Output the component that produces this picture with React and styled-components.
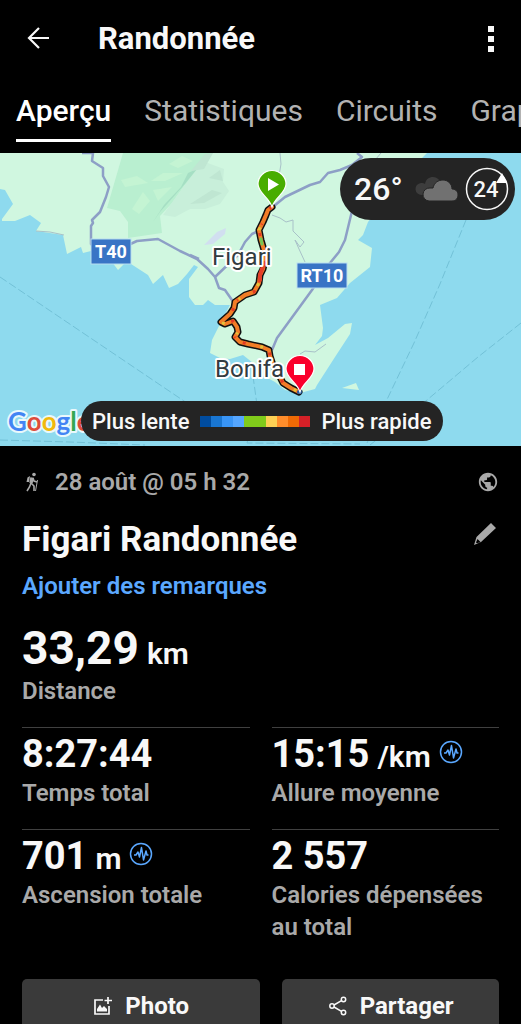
import React from "react";
import styled, { createGlobalStyle } from "styled-components";

const Colors = {
  BLACK: "#000",
  WHITE: "#f8f8f8",
  GREY: "#a9a9a9",
  TAB_GREY: "#b2b2b2",
  LINK: "#5ba8ff",
  PILL: "#242424",
  BUTTON: "#3a3a3a",
  DIVIDER: "#404040",
  ROAD: "#8d9fc6",
  SEA: "#8edaee",
  LAND: "#d0f7e0",
};

const GlobalStyle = createGlobalStyle`
  * {
    box-sizing: border-box;
  }
  body {
    margin: 0;
    background: ${Colors.BLACK};
    font-family: Roboto, "Liberation Sans", sans-serif;
  }
  button {
    font-family: inherit;
    border: 0;
    padding: 0;
    background: none;
    cursor: pointer;
  }
`;

const Page = styled.div`
  display: flex;
  flex-direction: column;
  height: 100vh;
  color: ${Colors.WHITE};
`;

const Header = styled.header`
  display: flex;
  align-items: center;
  flex-shrink: 0;
  height: 78px;
  padding: 0 16px 0 22px;
`;

const Title = styled.h1`
  flex: 1;
  margin: 0 0 0 44px;
  font-size: 31px;
  line-height: 40px;
  font-weight: 700;
`;

const IconButton = styled.button`
  display: flex;
  align-items: center;
  justify-content: center;
  width: ${({ $size }) => $size || 32}px;
  height: 32px;
  color: ${({ $muted }) => ($muted ? Colors.GREY : Colors.WHITE)};
`;

const Tabs = styled.nav`
  display: flex;
  flex-shrink: 0;
  gap: 33px;
  height: 75px;
  padding: 0 16px;
  overflow-x: auto;
  scrollbar-width: none;
`;

const Tab = styled.button`
  flex-shrink: 0;
  height: 64px;
  padding-top: 4px;
  font-size: 30px;
  line-height: 57px;
  font-weight: ${({ $active }) => ($active ? 500 : 400)};
  color: ${({ $active }) => ($active ? "#fff" : Colors.TAB_GREY)};
  border-bottom: 3px solid ${({ $active }) => ($active ? "#fff" : "transparent")};
`;

const Content = styled.main`
  flex: 1;
  min-height: 0;
  overflow-y: auto;
  scrollbar-width: none;
`;

const MapContainer = styled.section`
  position: relative;
  height: 293px;
  background: ${Colors.SEA};
`;

const MapDrawing = styled.svg`
  display: block;
  width: 100%;
  height: 100%;
`;

const Weather = styled.div`
  position: absolute;
  top: 5px;
  right: 6px;
  display: flex;
  align-items: center;
  height: 62px;
  padding: 0 5px 0 14px;
  border-radius: 31px;
  background: ${Colors.PILL};
`;

const Temperature = styled.span`
  width: 61px;
  font-size: 32px;
  font-weight: 500;
`;

const Legend = styled.div`
  position: absolute;
  left: 81px;
  bottom: 5px;
  display: flex;
  align-items: center;
  gap: 11px;
  height: 40px;
  padding: 0 11px;
  border-radius: 20px;
  background: ${Colors.PILL};
  font-size: 22px;
  font-weight: 500;
  white-space: nowrap;
`;

const Scale = styled.div`
  display: flex;
`;

const Swatch = styled.span`
  width: 11px;
  height: 11px;
  background: ${({ $color }) => $color};
`;

const Details = styled.section`
  padding: 20px 22px 24px;
`;

const DateRow = styled.div`
  display: flex;
  align-items: center;
  height: 32px;
  font-size: 24px;
  font-weight: 600;
  color: ${Colors.GREY};
`;

const DateText = styled.time`
  flex: 1;
  margin-left: 12px;
`;

const NameRow = styled.div`
  display: flex;
  align-items: flex-start;
  justify-content: space-between;
  margin-top: 20px;
`;

const ActivityName = styled.h2`
  margin: 0;
  font-size: 35px;
  line-height: 44px;
  font-weight: 700;
`;

const NotesLink = styled.a`
  display: block;
  width: fit-content;
  margin: 8px 0 19px;
  font-size: 24px;
  line-height: 32px;
  font-weight: 600;
  color: ${Colors.LINK};
  text-decoration: none;
`;

const StatGrid = styled.div`
  display: grid;
  grid-template-columns: 1fr 1fr;
  gap: 20px 22px;
  margin-top: 20px;
`;

const Stat = styled.div`
  padding-top: 4px;
  border-top: 1px solid ${Colors.DIVIDER};
`;

const StatValue = styled.div`
  display: flex;
  align-items: baseline;
  gap: 8px;
  height: ${({ $large }) => ($large ? 54 : 45)}px;
  font-size: ${({ $large }) => ($large ? 46 : 38)}px;
  line-height: ${({ $large }) => ($large ? 54 : 45)}px;
  font-weight: 700;
  white-space: nowrap;
`;

const Unit = styled.span`
  font-size: 30px;
  line-height: 32px;
  font-weight: 600;
`;

const StatLabel = styled.div`
  font-size: 24px;
  line-height: 32px;
  font-weight: 600;
  color: ${Colors.GREY};
`;

const PulseIcon = styled.svg`
  align-self: flex-start;
  margin-top: 8px;
`;

const Actions = styled.div`
  display: grid;
  grid-template-columns: 11fr 10fr;
  gap: 22px;
  margin-top: 36px;
`;

const ActionButton = styled.button`
  display: flex;
  align-items: center;
  justify-content: center;
  gap: 12px;
  height: 54px;
  border-radius: 5px;
  background: ${Colors.BUTTON};
  color: ${Colors.WHITE};
  font-size: 24px;
  font-weight: 700;
`;

const tabs = ["Aperçu", "Statistiques", "Circuits", "Graphiques"];

const scaleColors = [
  "#004c9f",
  "#1976d2",
  "#3995f6",
  "#55a6ff",
  "#80cb1b",
  "#80cb1b",
  "#fdd054",
  "#ff8d2b",
  "#ef6a05",
  "#d52027",
];

const stats = [
  { value: "8:27:44", label: "Temps total" },
  { value: "15:15", unit: "/km", label: "Allure moyenne", pulse: true },
  { value: "701", unit: "m", label: "Ascension totale", pulse: true },
  { value: "2 557", label: "Calories dépensées au total" },
];

const trackPath =
  "M272 207L268 210L266 215L263 222L259 230L261 240L264 250L265 260L263 269L260 275L259 283L254 292L245 295L235 302L234 308L230 314L221 322L225 324L233 321L237 327L238 332L235 337L240 342L248 344L262 347L269 350L270 356L273 365L280 377L283 383L291 388L299 392";

const ActivityMap = () => (
  <MapDrawing
    viewBox="0 153 521 293"
    preserveAspectRatio="xMidYMid slice"
    role="img"
    aria-label="Figari, Bonifacio"
  >
    <rect x="0" y="153" width="521" height="293" fill={Colors.SEA} />
    <path
      fill={Colors.LAND}
      d="M0 153V189L5 190L13 204L2 219V221L15 221L30 215L41 223L36 231L63 235L67 254L81 247L83 253L95 250L112 262L118 270L124 264L131 264L148 275L153 284L163 275L169 288L178 284L187 274L194 265L198 267L189 279L189 297L195 305L203 305L208 300L215 305L230 305L222 320L212 340L210 353L220 358L230 359L243 355L253 363L262 375L275 382L285 390L300 393L315 389L317 385L335 357L350 334L352 323L345 324L328 338L315 345L322 336L323 328L320 305L337 298L350 283L370 267L372 248L358 240L363 235L368 222L385 200L410 175L420 160L427 153Z"
    />
    <path fill={Colors.LAND} d="M342 388L356 383L359 390Z" />
    <path
      fill="#b9efd0"
      d="M123 153L107 208L120 211L128 222V238L162 233L160 216L172 203L184 186L200 171L213 153Z"
    />
    <path fill="#c8efda" d="M184 186L163 215L175 217L190 209L205 209L220 204L229 191L223 182L224 169L205 162L199 166Z" />
    <g fill="#c4f4d3">
      <path d="M121 180L137 176L148 183L125 187Z" />
      <path d="M151 181L163 173L183 173L165 181Z" />
      <path d="M132 209L143 192L150 201L139 214Z" />
      <path d="M153 190L172 187L158 201Z" />
      <path d="M169 164L182 156L193 161L178 168Z" />
    </g>
    <path fill="#a6dfc4" d="M153 222L160 212L184 185L197 169L188 173L181 187L164 205Z" />
    <path fill="#bfe6d2" d="M191 171L205 154L213 153L204 169ZM190 204L212 190L222 193L204 203ZM209 178L220 170L223 181Z" />
    <path fill="#d1dff0" d="M204 245L217 232L226 228L225 234L213 244Z" />

    <g fill="none" stroke="#72c1d7" strokeWidth="1" strokeDasharray="8 3">
      <path d="M0 277L181 399L220 425" />
      <path d="M466 220L455 247L440 284L414 343L382 410L367 443" />
      <path d="M521 323L478 357L427 400L370 445" />
      <path d="M0 440L70 442L145 445" />
      <path d="M253 376L257 405L247 443L360 444" />
    </g>
    <g fill="none" stroke="#a8c1c8" strokeWidth="1">
      <path d="M280 153L281 164L279 176" />
      <path d="M272 215L280 218L286 222L293 220V231L304 242L300 247L295 240L299 249L305 262" />
      <path d="M300 354L305 351L315 352L326 344" />
      <path d="M381 153L370 166L364 170" />
      <path d="M36 231L50 232L64 235" />
    </g>
    <g fill="none" stroke={Colors.ROAD} strokeWidth="2.5" strokeLinejoin="round">
      <path d="M82 153H93L92 161L103 168V176L109 187L106 197L100 212L92 220L93 223L91 226L91 244L98 250M126 246L137 241L158 239L180 251L197 259L208 269L215 277L219 288L225 290L234 303" />
      <path d="M190 255L199 259M215 277L238 255L245 242L252 234L261 230" />
      <path d="M274 206L285 197L310 185L320 182L328 173L340 170L352 165L362 157L357 153" />
      <path d="M352 211L345 240L339 252L330 263L312 290L277 338L272 350" />
    </g>

    <g fill="none" strokeLinejoin="round" strokeLinecap="round">
      <path d={trackPath} stroke="#111" strokeWidth="7" />
      <path d={trackPath} stroke="#f27d27" strokeWidth="4" />
      <path d={trackPath} stroke="#e23b25" strokeWidth="3" strokeDasharray="3 17 1 9" strokeLinecap="butt" />
      <path d={trackPath} stroke="#e2c13b" strokeWidth="3" strokeDasharray="2 31 3 22" strokeDashoffset="9" strokeLinecap="butt" />
      <path d="M261 239L262 244" stroke="#77c652" strokeWidth="3" />
      <path d="M264 263L260 275L260 280" stroke="#e5402a" strokeWidth="4" />
      <path d="M299 392H300" stroke="#255ea8" strokeWidth="4" />
    </g>

    <g fontFamily="Roboto, sans-serif">
      <g fontSize="24" fill="#333b40" stroke="#fff" strokeWidth="4" strokeLinejoin="round" paintOrder="stroke">
        <text x="212" y="265">Figari</text>
        <text x="215" y="377">Bonifa</text>
      </g>
      <g fill="#3974c5" stroke="#b9def0" strokeWidth="1">
        <rect x="91" y="239" width="40" height="25" />
        <rect x="297" y="263" width="50" height="25" />
      </g>
      <g fontSize="18" fontWeight="700" fill="#fff" textAnchor="middle">
        <text x="111" y="258">T40</text>
        <text x="322" y="282">RT10</text>
      </g>
    </g>

    <path
      fill="#48ad00"
      stroke="#fff"
      strokeWidth="1.2"
      d="M272 207C269 197 258 193 258 184A14 13.5 0 0 1 286 184C286 193 275 197 272 207Z"
    />
    <path fill="#fff" d="M268 178V191L279 184.5Z" />
    <path
      fill="#fa002b"
      stroke="#fff"
      strokeWidth="1.2"
      d="M300 392C297 382 286 378 286 369A14 13.5 0 0 1 314 369C314 378 303 382 300 392Z"
    />
    <rect x="294" y="364" width="11" height="11" fill="#fff" />

    <text
      x="8"
      y="431"
      fontFamily="Lato, sans-serif"
      fontSize="26"
      fontWeight="700"
      stroke="#e9f8fc"
      strokeWidth="4"
      strokeLinejoin="round"
      paintOrder="stroke"
    >
      <tspan fill="#4285f4">G</tspan>
      <tspan fill="#de4b3b">o</tspan>
      <tspan fill="#f2b90c">o</tspan>
      <tspan fill="#4285f4">g</tspan>
      <tspan fill="#34a853">l</tspan>
      <tspan fill="#de4b3b">e</tspan>
    </text>
  </MapDrawing>
);

const WeatherBadge = () => (
  <Weather>
    <Temperature>26°</Temperature>
    <svg width="43" height="26" viewBox="0 0 43 26" aria-hidden="true">
      <path fill="#3d3d3d" d="M7 19A6 6 0 0 1 6 7C8 7 9 7 10 8C11 3 14 1 18 1C22 1 25 4 26 8L17 19Z" />
      <path
        fill="#717171"
        stroke={Colors.PILL}
        strokeWidth="1"
        d="M14 25A6.5 6.5 0 0 1 15 12H18C19 7 23 4 28 4C33 4 37 8 37 13C40 13 43 15 43 19C43 22 41 25 37 25Z"
      />
    </svg>
    <svg width="52" height="46" viewBox="0 0 52 46" role="img" aria-label="Vent 24">
      <circle cx="29" cy="23" r="20.5" fill="none" stroke="#f8f8f8" strokeWidth="1.5" />
      <path fill="#fff" d="M44 7L38 17H49Z" />
      <text x="28" y="31" textAnchor="middle" fontSize="22" fontWeight="500" fill="#f8f8f8">
        24
      </text>
    </svg>
  </Weather>
);

const HikerIcon = () => (
  <svg width="21" height="22" viewBox="0 0 21 22" fill="none" stroke={Colors.GREY} aria-hidden="true">
    <circle cx="12" cy="3.5" r="1.8" fill={Colors.GREY} stroke="none" />
    <path d="M5.5 6.5L8 5L7 11H4.5Z" fill={Colors.GREY} stroke="none" />
    <path d="M10 6.5L9 12" strokeWidth="3.5" />
    <path d="M9 12L12 15V20M9 12L7.5 16L5 20M11 7L12 10L15 11" strokeWidth="1.6" />
    <path d="M15.5 9L13.5 20" strokeWidth="1" />
  </svg>
);

const Pulse = () => (
  <PulseIcon width="24" height="24" viewBox="0 0 24 24" fill="none" stroke={Colors.LINK} aria-hidden="true">
    <circle cx="12" cy="12" r="10.5" strokeWidth="1.5" />
    <path d="M5 13H7L9 10L10.5 15L12.5 5.5L14.5 18L17 9L18 13H19.5" strokeWidth="1.5" strokeLinejoin="round" />
  </PulseIcon>
);

const StatBody = ({ value, unit, label, pulse, large }) => (
  <>
    <StatValue $large={large}>
      {value}
      {unit ? <Unit>{unit}</Unit> : null}
      {pulse ? <Pulse /> : null}
    </StatValue>
    <StatLabel>{label}</StatLabel>
  </>
);

const App = () => (
  <Page>
    <GlobalStyle />
    <Header>
      <IconButton aria-label="Retour">
        <svg width="26" height="26" viewBox="0 0 26 26" fill="none" stroke="currentColor" strokeWidth="2.2">
          <path d="M24 12H4M14 2L4 12L14 22" />
        </svg>
      </IconButton>
      <Title>Randonnée</Title>
      <IconButton $size={28} aria-label="Plus d'options">
        <svg width="6" height="26" viewBox="0 0 6 26" fill="currentColor">
          <path d="M0 0H6V6H0ZM0 10H6V16H0ZM0 20H6V26H0Z" />
        </svg>
      </IconButton>
    </Header>
    <Tabs>
      {tabs.map((tab, index) => (
        <Tab key={tab} $active={index === 0}>
          {tab}
        </Tab>
      ))}
    </Tabs>
    <Content>
      <MapContainer>
        <ActivityMap />
        <WeatherBadge />
        <Legend>
          Plus lente
          <Scale>
            {scaleColors.map((color, index) => (
              <Swatch key={index} $color={color} />
            ))}
          </Scale>
          Plus rapide
        </Legend>
      </MapContainer>
      <Details>
        <DateRow>
          <HikerIcon />
          <DateText>28 août @ 05 h 32</DateText>
          <svg width="22" height="22" viewBox="0 0 24 24" fill={Colors.GREY} aria-hidden="true">
            <path d="M12 2C6.48 2 2 6.48 2 12s4.48 10 10 10 10-4.48 10-10S17.52 2 12 2zm-1 17.93c-3.95-.49-7-3.85-7-7.93 0-.62.08-1.21.21-1.79L9 15v1c0 1.1.9 2 2 2v1.93zm6.9-2.54c-.26-.81-1-1.39-1.9-1.39h-1v-3c0-.55-.45-1-1-1H8v-2h2c.55 0 1-.45 1-1V7h2c1.1 0 2-.9 2-2v-.41c2.93 1.19 5 4.06 5 7.41 0 2.08-.8 3.97-2.1 5.39z" />
          </svg>
        </DateRow>
        <NameRow>
          <ActivityName>Figari Randonnée</ActivityName>
          <IconButton $size={28} $muted aria-label="Modifier le nom">
            <svg width="24" height="24" viewBox="0 0 24 24" fill="currentColor">
              <path fillRule="evenodd" d="M18 1L23 6L8 20L1 23L3.5 15ZM4.5 17L3 20.5L4 21.2L7.5 20Z" />
            </svg>
          </IconButton>
        </NameRow>
        <NotesLink href="#remarques">Ajouter des remarques</NotesLink>
        <StatBody value="33,29" unit="km" label="Distance" large />
        <StatGrid>
          {stats.map((stat) => (
            <Stat key={stat.label}>
              <StatBody {...stat} />
            </Stat>
          ))}
        </StatGrid>
        <Actions>
          <ActionButton>
            <svg width="20" height="20" viewBox="0 0 20 20" fill="none" stroke="currentColor" aria-hidden="true">
              <path d="M10 4H2V18H16V10M15 1V8M11.5 4.5H19" strokeWidth="1.7" />
              <path d="M4 15.5V13L7 8.5L9 12L11 10L14 13V15.5Z" fill="currentColor" stroke="none" />
            </svg>
            Photo
          </ActionButton>
          <ActionButton>
            <svg width="20" height="20" viewBox="0 0 20 20" fill="none" stroke="currentColor" strokeWidth="1.5" aria-hidden="true">
              <circle cx="4" cy="10" r="2.2" />
              <circle cx="15.5" cy="3.5" r="2.2" />
              <circle cx="15.5" cy="16.5" r="2.2" />
              <path d="M6 9L13.5 4.7M6 11L13.5 15.3" />
            </svg>
            Partager
          </ActionButton>
        </Actions>
      </Details>
    </Content>
  </Page>
);

export default App;
